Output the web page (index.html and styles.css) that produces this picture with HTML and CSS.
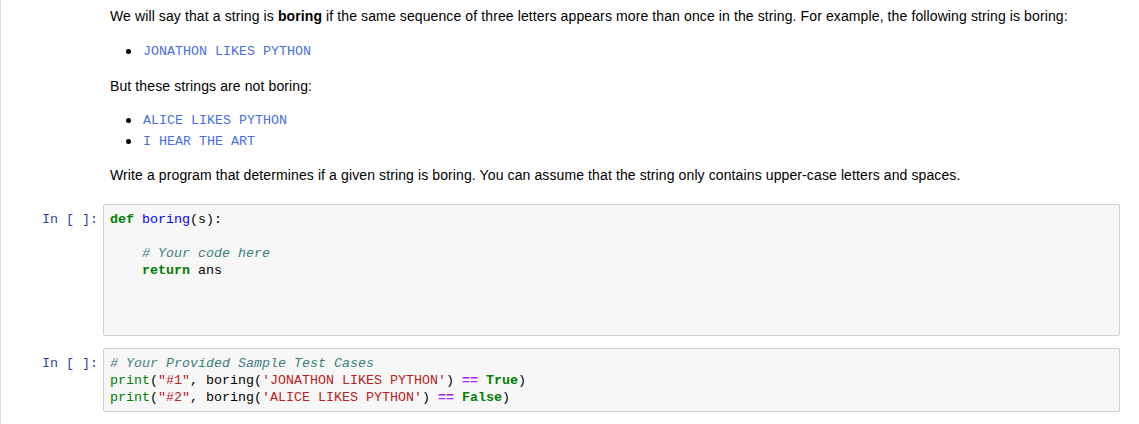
FILE: index.html
```html
<!DOCTYPE html>
<html>
<head>
<meta charset="utf-8">
<link rel="stylesheet" href="styles.css">
</head>
<body>
<div class="notebook">
  <div class="cell text-cell">
    <div class="prompt"></div>
    <div class="md">
      <p>We will say that a string is <strong>boring</strong> if the same sequence of three letters appears more than once in the string. For example, the following string is boring:</p>
      <ul class="list-one">
        <li><code>JONATHON LIKES PYTHON</code></li>
      </ul>
      <p>But these strings are not boring:</p>
      <ul class="list-two">
        <li><code>ALICE LIKES PYTHON</code></li>
        <li><code>I HEAR THE ART</code></li>
      </ul>
      <p>Write a program that determines if a given string is boring. You can assume that the string only contains upper-case letters and spaces.</p>
    </div>
  </div>
  <div class="cell code-cell first-code">
    <div class="prompt">In [ ]:</div>
    <div class="input-area tall"><pre><span class="kw">def</span> <span class="def">boring</span>(s):

    <span class="cm"># Your code here</span>
    <span class="kw">return</span> ans</pre></div>
  </div>
  <div class="cell code-cell">
    <div class="prompt">In [ ]:</div>
    <div class="input-area"><pre><span class="cm"># Your Provided Sample Test Cases</span>
<span class="bi">print</span>(<span class="str">"#1"</span>, boring(<span class="str">'JONATHON LIKES PYTHON'</span>) <span class="op">==</span> <span class="kw">True</span>)
<span class="bi">print</span>(<span class="str">"#2"</span>, boring(<span class="str">'ALICE LIKES PYTHON'</span>) <span class="op">==</span> <span class="kw">False</span>)</pre></div>
  </div>
</div>
</body>
</html>
```
FILE: styles.css
```css
html, body {
  margin: 0;
  padding: 0;
  background: #ffffff;
}
body {
  font-family: "Liberation Sans", Arial, sans-serif;
  font-size: 14px;
  color: #000000;
  height: 424px;
  overflow: hidden;
}
.notebook {
  border-left: 1px solid #dcdcdc;
  min-height: 424px;
  box-sizing: border-box;
  padding-right: 19px;
}
.cell {
  display: grid;
  grid-template-columns: 102px 1fr;
}
.text-cell {
  padding-top: 6px;
}
.md {
  padding-left: 7px;
  line-height: 20px;
}
.md p {
  margin: 0;
  letter-spacing: 0.11px;
}
.md ul {
  margin: 14px 0;
  padding-left: 16px;
  list-style: none;
}
.md ul.list-one {
  margin-top: 15px;
}
.md ul.list-two {
  margin-bottom: 13px;
}
.md li {
  display: flex;
  align-items: center;
  height: 21px;
  line-height: 21px;
}
.md li::before {
  content: "";
  flex: none;
  width: 5px;
  height: 5px;
  border-radius: 50%;
  background: #000000;
  margin-right: 12px;
}
.md code {
  font-family: "Liberation Mono", "Courier New", monospace;
  font-size: 13.33px;
  line-height: 21px;
  color: #4a6fe3;
}
.first-code {
  margin-top: 19px;
}
.code-cell + .code-cell {
  margin-top: 12px;
}
.prompt {
  font-family: "Liberation Mono", "Courier New", monospace;
  font-size: 13.33px;
  line-height: 17px;
  color: #303f9f;
  text-align: right;
  padding-top: 7px;
  padding-right: 5px;
}
.input-area {
  background: #f7f7f7;
  border: 1px solid #cfcfcf;
  border-radius: 2px;
  padding: 6px 6px 5px 6px;
}
.input-area.tall {
  min-height: 119px;
}
.input-area pre {
  margin: 0;
  font-family: "Liberation Mono", "Courier New", monospace;
  font-size: 13.33px;
  line-height: 17px;
  color: #000000;
}
.kw { color: #008000; font-weight: bold; }
.def { color: #0000ff; }
.cm { color: #408080; font-style: italic; }
.bi { color: #008000; }
.str { color: #ba2121; }
.op { color: #aa22ff; font-weight: bold; }
```
